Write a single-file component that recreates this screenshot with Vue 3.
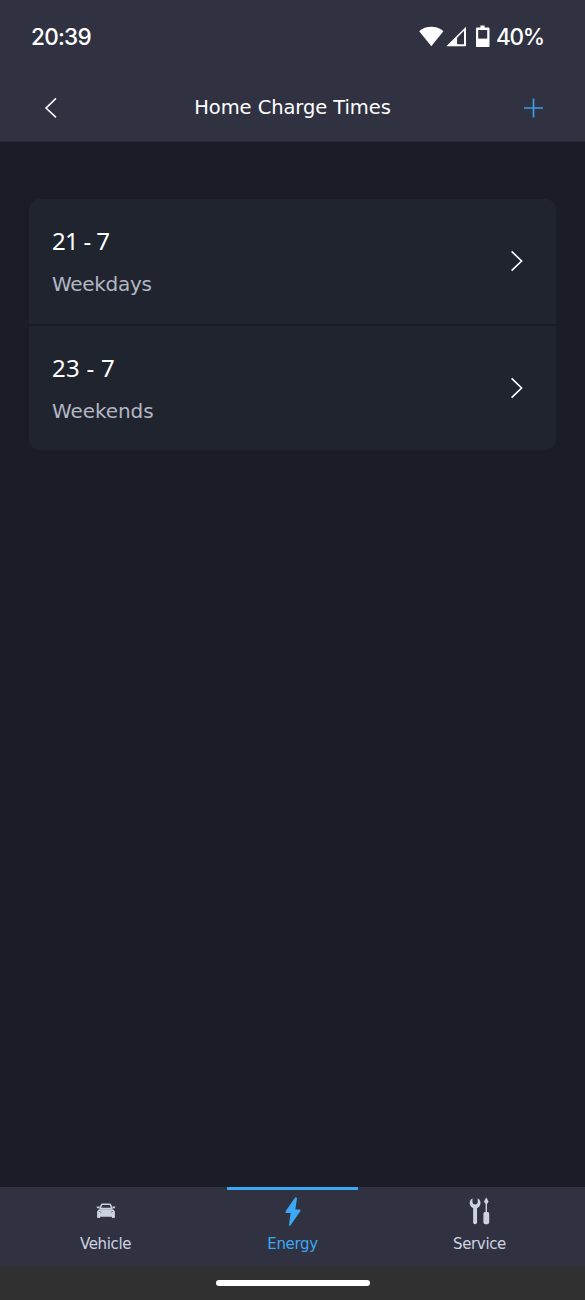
<script setup>
const schedules = [
  { time: '21 - 7', days: 'Weekdays', cls: 'weekdays' },
  { time: '23 - 7', days: 'Weekends', cls: 'weekends' },
]
</script>

<template>
  <div class="screen">
    <div class="status">
      <span class="clock">20:39</span>
      <div class="indicators">
        <svg class="signals" width="72" height="24" viewBox="0 0 72 24">
          <path d="M.2 6.2C6.8.3 17.8.3 24.4 6.2L12.3 21.2Z" fill="#fff" />
          <path d="M27.3 21.2 47 1.700V21.200Z" fill="#fff" />
          <path d="M38.1 12.7 45 5.8V19.3H38.1Z" fill="#303241" />
          <path d="M61.4.5h4.2v2h3.7q1.2 0 1.2 1.2v17.2q0 1.2-1.2 1.2H58.2Q57 22.100 57 20.900V3.700q0-1.200 1.200-1.200h3.200Z" fill="#fff" />
          <path d="M59.200 5h9v8.600h-9Z" fill="#303241" />
        </svg>
        <span class="percent">40%</span>
      </div>
    </div>

    <header class="header">
      <svg class="back" width="16" height="24" viewBox="0 0 16 24">
        <path d="M13 2.400 3 12.100 13 21.400" fill="none" stroke="#fff" stroke-width="1.500" />
      </svg>
      <h1 class="title">Home Charge Times</h1>
      <svg class="plus" width="20" height="20" viewBox="0 0 20 20">
        <path d="M10.500 .5v19M1 10h19" stroke="#399fe6" stroke-width="1.700" />
      </svg>
    </header>

    <main class="content">
      <div v-for="s in schedules" :key="s.days" class="card">
        <div class="info">
          <div class="time"><span :class="s.cls">{{ s.time }}</span></div>
          <div class="days"><span :class="s.cls">{{ s.days }}</span></div>
        </div>
        <svg class="chevron" width="14" height="22" viewBox="0 0 14 22">
          <path d="M1.600 1.400 11.600 11 1.600 20.600" fill="none" stroke="#fff" stroke-width="1.600" />
        </svg>
      </div>
    </main>

    <nav class="tabs">
      <div class="tab">
        <svg width="30" height="30" viewBox="0 0 30 30">
          <g transform="translate(0 .6)" fill="#cdd2e2">
            <path d="M9 11 10.500 7.200Q10.800 6.600 11.600 6.600H18.400Q19.200 6.600 19.500 7.200L21 11Z" fill="none" stroke="#cdd2e2" stroke-width="1.500" stroke-linejoin="round" />
            <path d="M5.600 8.900h3.200l-.8 1.800H6.100ZM24.400 8.900h-3.200l.8 1.800h1.900Z" />
            <path d="M8 11.700H22L23.900 13.600V19.700Q23.900 20.500 23.100 20.500H21.700Q21 20.500 20.700 19.200H9.300Q9 20.500 8.300 20.500H6.900Q6.100 20.500 6.100 19.700V13.600Z" />
            <path d="m7.800 13.700 2.600 1.100M22.200 13.700l-2.600 1.100" stroke="#6b7083" stroke-width=".8" />
          </g>
        </svg>
        <span class="label">Vehicle</span>
      </div>
      <div class="tab active">
        <svg width="30" height="30" viewBox="0 0 30 30">
          <path d="M16.700 .9 7.800 14Q7 15.800 8.500 16H12.600L11 28Q11.200 29.500 12.400 28.600L22.300 14.200Q23 12.700 21.800 12.500H17.300L19 1.600Q18.300 -.6 16.700 .9Z" fill="#3ba8f5" />
        </svg>
        <span class="label">Energy</span>
      </div>
      <div class="tab">
        <svg width="30" height="30" viewBox="0 0 30 30">
          <path d="M10.100 11V25.300" fill="none" stroke="#cdd2e2" stroke-width="3.900" stroke-linecap="round" />
          <path d="M7.500 1.200A5.500 5.500 0 1 0 12.700 1.200V4.800A2.600 2.600 0 1 1 7.500 4.800Z" fill="#cdd2e2" />
          <path d="M20.900 1q.4-.5.800 0L23.600 4.600 22.500 6.600H22V15H22.800Q24.200 15.200 24.200 17V25.200Q24.200 27.200 21.300 27.200T18.400 25.200V17Q18.400 15.200 19.800 15H20.600V6.600H20.100L19 4.600Z" fill="#cdd2e2" />
        </svg>
        <span class="label">Service</span>
      </div>
    </nav>
    <div class="system"><div class="handle"></div></div>
  </div>
</template>

<style>
body { background: #1a1c27; }
</style>

<style scoped>
.screen {
  width: 585px;
  height: 1300px;
  display: flex;
  flex-direction: column;
  background: #1a1c27;
  color: #fff;
  font-family: "DejaVu Sans", sans-serif;
  overflow: hidden;
}
.status {
  box-sizing: border-box;
  height: 74px;
  padding: 0 41px 0 31px;
  display: flex;
  align-items: center;
  justify-content: space-between;
  background: #303241;
  font-family: Inter, sans-serif;
  font-size: 22.500px;
  font-weight: 500;
  line-height: 74px;
}
.clock { letter-spacing: -0.700px; }
.indicators { display: flex; align-items: center; gap: 5px; }
.percent { letter-spacing: -1.200px; }
.header {
  box-sizing: border-box;
  height: 68px;
  flex: none;
  padding: 0 42px;
  display: grid;
  grid-template-columns: 20px 1fr 20px;
  align-items: center;
  background: #303241;
  border-bottom: 1px solid #292b38;
}
.back { margin-left: 1px; }
.title {
  margin: 0;
  text-align: center;
  font-size: 19.500px;
  line-height: 66px;
  font-weight: 400;
  letter-spacing: -0.080px;
  white-space: nowrap;
}
.content {
  flex: 1;
  padding: 57px 29px 0;
  display: flex;
  flex-direction: column;
  gap: 2px;
}
.card {
  box-sizing: border-box;
  height: 125px;
  padding: 0 32px 0 23px;
  display: flex;
  align-items: flex-start;
  justify-content: space-between;
  background: #20242f;
}
.info { padding-top: 21px; }
.chevron { margin-top: 51px; }
.card:first-child { border-radius: 10px 10px 0 0; }
.card:last-child { height: 124px; border-radius: 0 0 10px 10px; }
.time {
  height: 42px;
  line-height: 42px;
  font-family: "Noto Sans", sans-serif;
  font-size: 24px;
}
.time .weekdays { letter-spacing: -0.700px; }
.time .weekends { letter-spacing: 0.250px; }
.days {
  height: 42px;
  line-height: 45px;
  font-size: 20px;
  letter-spacing: -0.300px;
  color: #b3b6c4;
}
.days .weekends { letter-spacing: -0.080px; }
.tabs {
  box-sizing: border-box;
  height: 80px;
  flex: none;
  padding: 0 12px;
  display: grid;
  grid-template-columns: repeat(3, 187px);
  background: #303241;
}
.tab {
  box-sizing: border-box;
  padding-top: 7px;
  display: flex;
  flex-direction: column;
  align-items: center;
  border-top: 3px solid transparent;
  color: #cdd2e2;
}
.tab svg { flex: none; }
.active {
  width: 131px;
  justify-self: center;
  border-top-color: #3ba8f5;
  color: #3ba8f5;
}
.label {
  margin-top: 5px;
  font-size: 15px;
  line-height: 24px;
  letter-spacing: -0.350px;
}
.system {
  height: 33px;
  flex: none;
  display: flex;
  align-items: center;
  justify-content: center;
  background: #303030;
}
.handle {
  width: 154px;
  height: 6px;
  margin-bottom: 1px;
  border-radius: 3px;
  background: #fff;
}
</style>
